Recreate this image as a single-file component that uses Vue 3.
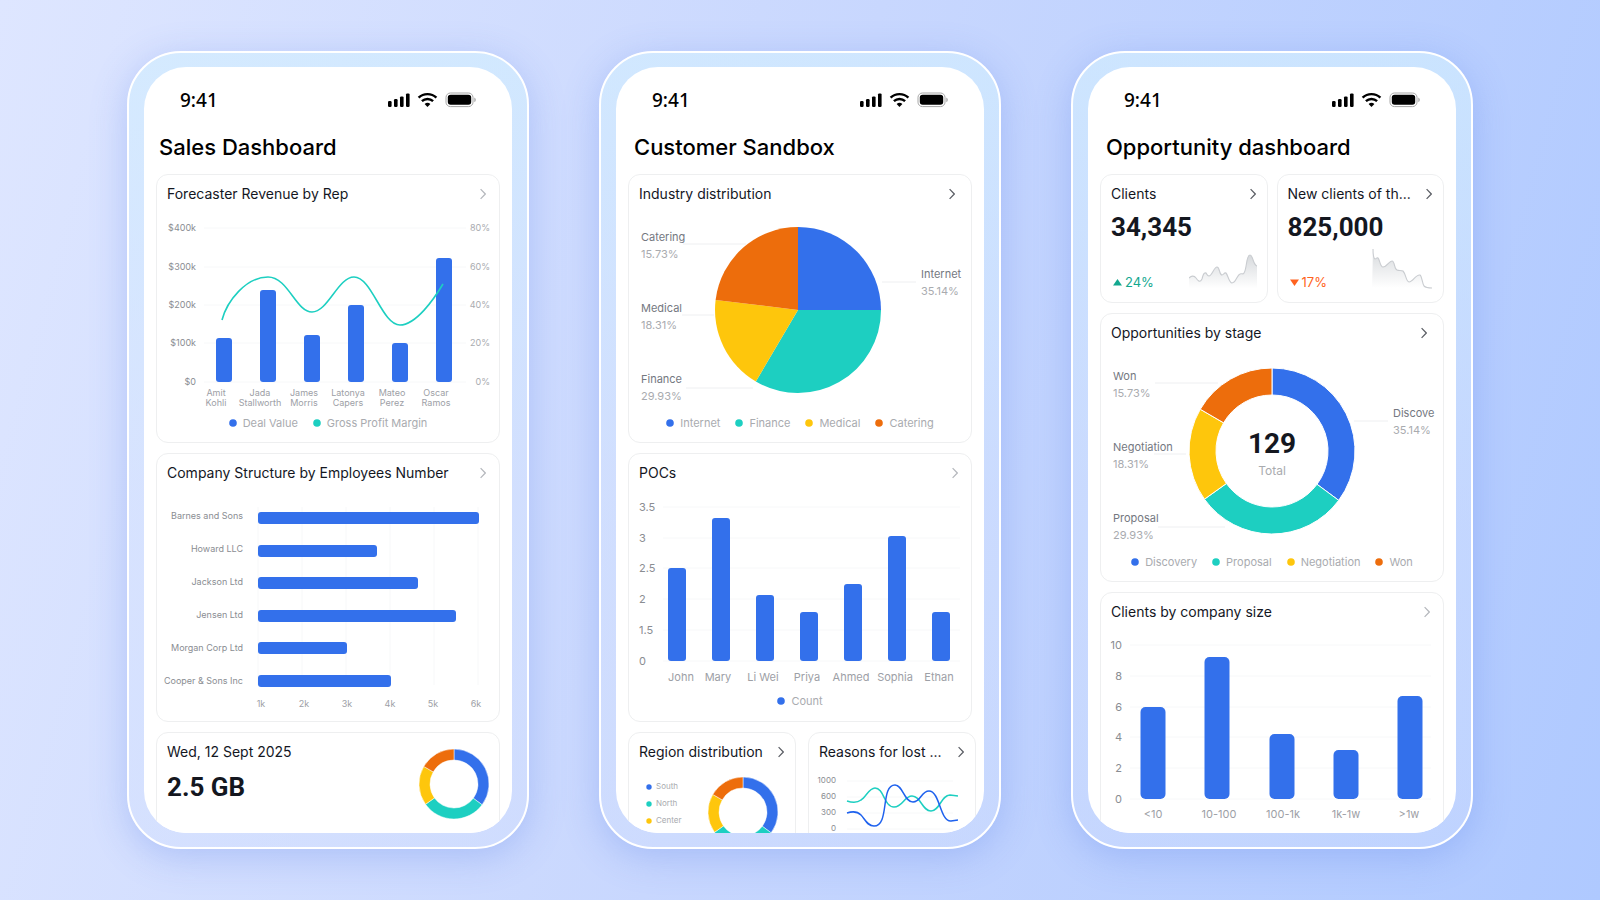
<script setup>
const BLUE = '#3370eb'
const TEAL = '#1dcfc1'
const YELLOW = '#fec60c'
const ORANGE = '#ed6d0c'

const point = (cx, cy, r, deg) => {
  const a = ((deg - 90) * Math.PI) / 180
  return `${(cx + r * Math.cos(a)).toFixed(2)} ${(cy + r * Math.sin(a)).toFixed(2)}`
}

const arc = (cx, cy, outer, inner, from, to) => {
  const large = to - from > 180 ? 1 : 0
  const end = inner
    ? `L${point(cx, cy, inner, to)} A${inner} ${inner} 0 ${large} 0 ${point(cx, cy, inner, from)}`
    : `L${cx} ${cy}`
  return `M${point(cx, cy, outer, from)} A${outer} ${outer} 0 ${large} 1 ${point(cx, cy, outer, to)} ${end} Z`
}

const ringStops = [0, 126.5, 234.5, 300.2, 360]
const pieStops = [0, 90, 210.5, 277, 360]
const shades = [BLUE, TEAL, YELLOW, ORANGE]

const slices = (cx, cy, outer, inner, stops) =>
  shades.map((fill, i) => ({ fill, d: arc(cx, cy, outer, inner, stops[i], stops[i + 1]) }))

const smallRing = slices(36, 36, 35, 24, ringStops)

const callouts = (a, b, c, d) => [
  { x: 12, y: 36, name: a, pct: '15.73%' },
  { x: 12, y: 107, name: b, pct: '18.31%' },
  { x: 12, y: 178, name: c, pct: '29.93%' },
  { x: 292, y: 73, name: d, pct: '35.14%' },
]
const leaders = [
  [54, 39, 117],
  [53, 110, 85],
  [57, 183, 124],
  [253, 77, 287],
]

const combo = {
  left: ['$400k', '$300k', '$200k', '$100k', '$0'],
  right: ['80%', '60%', '40%', '20%', '0%'],
  ys: [23, 62, 100, 138, 177],
  bars: [
    { x: 66, top: 133, lx: 58, a: 'Amit', b: 'Kohli' },
    { x: 110, top: 85, lx: 102, a: 'Jada', b: 'Stallworth' },
    { x: 154, top: 130, lx: 146, a: 'James', b: 'Morris' },
    { x: 198, top: 100, lx: 190, a: 'Latonya', b: 'Capers' },
    { x: 242, top: 138, lx: 234, a: 'Mateo', b: 'Perez' },
    { x: 286, top: 53, lx: 278, a: 'Oscar', b: 'Ramos' },
  ],
}

const companies = [
  ['Barnes and Sons', 221],
  ['Howard LLC', 119],
  ['Jackson Ltd', 160],
  ['Jensen Ltd', 198],
  ['Morgan Corp Ltd', 89],
  ['Cooper & Sons Inc', 133],
]
const thousands = ['1k', '2k', '3k', '4k', '5k', '6k']

const pocs = {
  type: 'bars', title: 'POCs', chevron: 'soft', height: 207,
  gridX: [34, 331], labelX: 10, anchor: 'start', width: 18, radius: 3, base: 177, labelY: 197,
  ticks: [['3.5', 23], ['3', 54], ['2.5', 84], ['2', 115], ['1.5', 146], ['0', 177]],
  bars: [
    { x: 48, top: 84, lx: 52, name: 'John' },
    { x: 92, top: 34, lx: 89, name: 'Mary' },
    { x: 136, top: 111, lx: 134, name: 'Li Wei' },
    { x: 180, top: 128, lx: 178, name: 'Priya' },
    { x: 224, top: 100, lx: 222, name: 'Ahmed' },
    { x: 268, top: 52, lx: 266, name: 'Sophia' },
    { x: 312, top: 128, lx: 310, name: 'Ethan' },
  ],
  legend: [['Count', BLUE]],
}

const sizes = {
  type: 'bars', title: 'Clients by company size', chevron: 'soft', height: 237,
  gridX: [29, 330], labelX: 21, anchor: 'end', width: 25, radius: 5, base: 176, labelY: 195,
  ticks: [['10', 22], ['8', 53], ['6', 84], ['4', 114], ['2', 145], ['0', 176]],
  bars: [
    { x: 52, top: 84, lx: 52, name: '<10' },
    { x: 116, top: 34, lx: 118, name: '10-100' },
    { x: 181, top: 111, lx: 182, name: '100-1k' },
    { x: 245, top: 127, lx: 245, name: '1k-1w' },
    { x: 309, top: 73, lx: 308, name: '>1w' },
  ],
}

const phones = [
  {
    title: 'Sales Dashboard',
    rows: [
      [{
        type: 'combo', title: 'Forecaster Revenue by Rep', chevron: 'soft',
        legend: [['Deal Value', BLUE], ['Gross Profit Margin', TEAL]],
      }],
      [{ type: 'hbar', title: 'Company Structure by Employees Number', chevron: 'soft' }],
      [{ type: 'storage', title: 'Wed, 12 Sept 2025', value: '2.5 GB' }],
    ],
  },
  {
    title: 'Customer Sandbox',
    inset: true,
    rows: [
      [{
        type: 'round', title: 'Industry distribution', chevron: 'dark',
        slices: slices(169, 105, 83, 0, pieStops),
        callouts: callouts('Catering', 'Medical', 'Finance', 'Internet'),
        legend: [['Internet', BLUE], ['Finance', TEAL], ['Medical', YELLOW], ['Catering', ORANGE]],
      }],
      [pocs],
      [
        { type: 'region', title: 'Region distribution', chevron: 'dark', small: true },
        { type: 'reasons', title: 'Reasons for lost ...', chevron: 'dark', small: true },
      ],
    ],
  },
  {
    title: 'Opportunity dashboard',
    inset: true,
    rows: [
      [
        {
          type: 'metric', title: 'Clients', chevron: 'dark', small: true, value: '34,345', change: '24%', up: true,
          w: 68, h: 42, id: 'spark-up',
          line: 'M0 30 C2 28 5 27 7 30 C9 33 11 35 13 31 C14 27 15 24 17 25 C18 26 18 28 20 28 C23 28 25 19 28 19 C31 19 30 27 33 27 C35 27 35 24 37 25 C39 27 40 35 43 35 C47 35 48 27 51 26 C53 25 54 27 55 25 C58 21 57 7 61 7 C64 7 64 17 68 18',
        },
        {
          type: 'metric', title: 'New clients of th...', chevron: 'dark', small: true, value: '825,000', change: '17%', up: false,
          w: 61, h: 42, id: 'spark-down',
          line: 'M1 1 C1 5 1 10 3 11 C4 11 5 9 6 10 C8 12 8 19 11 19 C15 19 17 13 20 13 C23 13 22 21 25 22 C27 23 29 22 31 23 C34 26 34 34 37 34 C41 34 44 26 48 27 C50 28 50 35 52 38 C54 40 57 40 60 40',
        },
      ],
      [{
        type: 'round', title: 'Opportunities by stage', chevron: 'dark',
        slices: slices(171, 107, 83, 56, ringStops), total: '129',
        callouts: callouts('Won', 'Negotiation', 'Proposal', 'Discove'),
        legend: [['Discovery', BLUE], ['Proposal', TEAL], ['Negotiation', YELLOW], ['Won', ORANGE]],
      }],
      [sizes],
    ],
  },
]

const regions = [['South', BLUE], ['North', TEAL], ['Center', YELLOW]]
const reasonTicks = [['1000', 18], ['600', 34], ['300', 50], ['0', 66]]
</script>

<template>
  <main class="stage">
    <section v-for="phone in phones" :key="phone.title" class="phone">
      <div class="screen">
        <div class="status">
          <span class="time">9:41</span>
          <svg class="status-icons" viewBox="0 0 88 16" width="88" height="16" aria-hidden="true">
            <rect x="0" y="9" width="3.6" height="6" rx="1.2" />
            <rect x="6" y="7" width="3.6" height="8" rx="1.2" />
            <rect x="12" y="4.4" width="3.6" height="10.6" rx="1.2" />
            <rect x="18" y="1.4" width="3.6" height="13.6" rx="1.2" />
            <g fill="none" stroke="#000" stroke-width="2.4">
              <path d="M30.6 5.7 A12.8 12.8 0 0 1 48.4 5.7" />
              <path d="M33.9 9.2 A8.2 8.2 0 0 1 45.1 9.2" />
            </g>
            <path d="M39.5 15 L36.6 12 A4.3 4.3 0 0 1 42.4 12 Z" />
            <rect x="58" y="1" width="27" height="13.6" rx="4.4" fill="none" stroke="#a6a6a6" />
            <rect x="59.8" y="2.8" width="23.4" height="10" rx="2.8" />
            <path d="M86.3 5.4 Q87.8 6.2 87.8 7.8 Q87.8 9.4 86.3 10.2 Z" fill="#a6a6a6" />
          </svg>
        </div>
        <h1 class="title" :class="{ inset: phone.inset }">{{ phone.title }}</h1>

        <div class="rows">
          <div
            v-for="(row, r) in phone.rows"
            :key="r"
            class="row"
            :class="{ overhang: row[0].type === 'region' }"
          >
            <article v-for="card in row" :key="card.title" class="card" :class="card.type">
              <header class="head" :class="{ small: card.small, soft: card.chevron === 'soft' }">
                <h2 class="name">{{ card.title }}</h2>
                <button
                  v-if="card.chevron"
                  class="more"
                  type="button"
                  :aria-label="`Open ${card.title}`"
                >
                  <svg viewBox="0 0 6 12" width="6" height="12">
                    <path d="M0.6 1.2 L5.3 6 L0.6 10.8" fill="none" stroke="currentColor" stroke-width="1.2" />
                  </svg>
                </button>
              </header>

              <svg v-if="card.type === 'combo'" class="chart" viewBox="-1 0 342 208">
                <g v-for="(y, i) in combo.ys" :key="y">
                  <line class="grid" x1="46" x2="308" :y1="y" :y2="y" />
                  <text class="t9 mid" x="38" :y="y + 3" text-anchor="end">{{ combo.left[i] }}</text>
                  <text class="t9 pale" x="332" :y="y + 3" text-anchor="end">{{ combo.right[i] }}</text>
                </g>
                <g v-for="bar in combo.bars" :key="bar.a">
                  <rect :x="bar.x - 8" :y="bar.top" width="16" :height="177 - bar.top" rx="3" :fill="BLUE" />
                  <text class="t9 soft" :x="bar.lx" y="191" text-anchor="middle">{{ bar.a }}</text>
                  <text class="t9 soft" :x="bar.lx" y="201" text-anchor="middle">{{ bar.b }}</text>
                </g>
                <path
                  d="M64 115 C69 96 88 72 110 72 C130 72 138 107 154 107 C170 107 180 72 196 72 C214 72 224 120 242 120 C258 120 276 94 285 79"
                  fill="none"
                  :stroke="TEAL"
                  stroke-width="1.6"
                />
              </svg>

              <svg v-else-if="card.type === 'hbar'" class="chart" viewBox="-1 0 342 237">
                <g v-for="(label, i) in thousands" :key="label">
                  <line class="grid" :x1="100 + i * 44" :x2="100 + i * 44" y1="23" y2="201" />
                  <text class="t9 soft" :x="103 + i * 43" y="223" text-anchor="middle">{{ label }}</text>
                </g>
                <g v-for="(company, i) in companies" :key="company[0]">
                  <rect x="100" :y="28 + Math.round(i * 32.6)" :width="company[1]" height="12" rx="3" :fill="BLUE" />
                  <text class="t9 mid" x="85" :y="35 + i * 33" text-anchor="end">{{ company[0] }}</text>
                </g>
              </svg>

              <svg v-else-if="card.type === 'round'" class="chart" viewBox="0 0 342 208">
                <line v-for="l in leaders" :key="l[1]" class="leader" :x1="l[0]" :x2="l[2]" :y1="l[1]" :y2="l[1]" />
                <path
                  v-for="slice in card.slices"
                  :key="slice.fill"
                  :d="slice.d"
                  :fill="slice.fill"
                  :stroke="card.total ? '#fff' : 'none'"
                  stroke-width="1"
                />
                <g v-for="c in card.callouts" :key="c.name">
                  <text class="t11 dark" :x="c.x" :y="c.y">{{ c.name }}</text>
                  <text class="t11 pale" :x="c.x" :y="c.y + 17">{{ c.pct }}</text>
                </g>
                <template v-if="card.total">
                  <text class="total" x="171" y="109" text-anchor="middle">{{ card.total }}</text>
                  <text class="t12 pale" x="171" y="131" text-anchor="middle">Total</text>
                </template>
              </svg>

              <svg v-else-if="card.type === 'bars'" class="chart" :viewBox="`0 0 342 ${card.height}`">
                <g v-for="tick in card.ticks" :key="tick[0]">
                  <line class="grid" :x1="card.gridX[0]" :x2="card.gridX[1]" :y1="tick[1]" :y2="tick[1]" />
                  <text class="t11 mid" :x="card.labelX" :y="tick[1] + 4" :text-anchor="card.anchor">{{ tick[0] }}</text>
                </g>
                <g v-for="bar in card.bars" :key="bar.name">
                  <rect
                    :x="bar.x - card.width / 2"
                    :y="bar.top"
                    :width="card.width"
                    :height="card.base - bar.top"
                    :rx="card.radius"
                    :fill="BLUE"
                  />
                  <text class="t11 soft" :x="bar.lx" :y="card.labelY" text-anchor="middle">{{ bar.name }}</text>
                </g>
              </svg>

              <template v-else-if="card.type === 'storage'">
                <p class="value">{{ card.value }}</p>
                <svg class="ring" viewBox="0 0 72 72" width="72" height="72" aria-hidden="true">
                  <path v-for="s in smallRing" :key="s.fill" :d="s.d" :fill="s.fill" stroke="#fff" stroke-width="0.5" />
                </svg>
              </template>

              <div v-else-if="card.type === 'region'" class="region-body">
                <ul class="region-list">
                  <li v-for="item in regions" :key="item[0]">
                    <svg viewBox="0 0 6 6" width="6" height="6" aria-hidden="true"><circle cx="3" cy="3" r="2.7" :fill="item[1]" /></svg>
                    {{ item[0] }}
                  </li>
                </ul>
                <svg class="region-ring" viewBox="0 0 72 72" width="72" height="72" aria-hidden="true">
                  <path v-for="s in smallRing" :key="s.fill" :d="s.d" :fill="s.fill" stroke="#fff" stroke-width="0.5" />
                </svg>
              </div>

              <svg v-else-if="card.type === 'reasons'" class="chart" viewBox="0 0 166 90">
                <g v-for="tick in reasonTicks" :key="tick[0]">
                  <line class="grid" x1="38" x2="144" :y1="tick[1]" :y2="tick[1]" />
                  <text class="t8 mid" x="27" :y="tick[1] + 2" text-anchor="end">{{ tick[0] }}</text>
                </g>
                <path
                  d="M38 38 C41 39 47 41 52 37 C57 34 60 25 66 25 C75 25 75 44 85 44 C94 44 95 33 103 33 C112 33 113 48 122 48 C131 48 132 32 141 32 L149 33"
                  fill="none"
                  :stroke="TEAL"
                  stroke-width="1.5"
                />
                <path
                  d="M38 50 C44 48 48 48 52 52 C56 56 58 63 65 63 C81 63 71 22 86 22 C94 22 95 39 104 39 C112 39 112 28 120 28 C131 28 131 59 142 58 L149 57"
                  fill="none"
                  stroke="#1f62ee"
                  stroke-width="1.5"
                />
              </svg>

              <template v-else-if="card.type === 'metric'">
                <p class="value">{{ card.value }}</p>
                <div class="trend">
                  <span class="change" :class="card.up ? 'up' : 'down'">
                    <svg viewBox="0 0 9 7" width="9" height="7" aria-hidden="true">
                      <path :d="card.up ? 'M4.5 0 L9 6.6 H0 Z' : 'M0 0.4 H9 L4.5 7 Z'" fill="currentColor" />
                    </svg>
                    {{ card.change }}
                  </span>
                  <svg :viewBox="`0 0 ${card.w} ${card.h}`" :width="card.w" :height="card.h" aria-hidden="true">
                    <defs>
                      <linearGradient :id="card.id" x1="0" y1="0" x2="0" y2="1">
                        <stop offset="0" stop-color="#d6d9dc" />
                        <stop offset="0.95" stop-color="#d6d9dc" stop-opacity="0" />
                      </linearGradient>
                    </defs>
                    <path :d="`${card.line} V${card.h} H0 Z`" :fill="`url(#${card.id})`" />
                    <path :d="card.line" fill="none" stroke="#c9ccd0" stroke-width="1.1" />
                  </svg>
                </div>
              </template>

              <ul v-if="card.legend" class="legend">
                <li v-for="item in card.legend" :key="item[0]">
                  <svg viewBox="0 0 8 8" width="8" height="8" aria-hidden="true"><circle cx="4" cy="4" r="3.8" :fill="item[1]" /></svg>
                  {{ item[0] }}
                </li>
              </ul>
            </article>
          </div>
        </div>
      </div>
    </section>
  </main>
</template>

<style>
html,
body {
  margin: 0;
}
</style>

<style scoped>
.stage {
  box-sizing: border-box;
  display: grid;
  grid-template-columns: repeat(3, minmax(0, 1fr));
  gap: 70px;
  height: 100vh;
  padding: 51px 127px;
  overflow: hidden;
  background: linear-gradient(105deg, #dee6ff 0%, #c8d7fe 48%, #afc9ff 100%);
  font-family: Inter, "Noto Sans", sans-serif;
  color: #14171f;
}

.phone {
  box-sizing: border-box;
  display: flex;
  min-height: 0;
  padding: 14px 15px;
  border: 2px solid #fff;
  border-radius: 54px;
  background: linear-gradient(180deg, rgba(210, 237, 255, 0.7) 0%, rgba(214, 228, 255, 0.45) 55%, rgba(214, 226, 255, 0.35) 100%);
  box-shadow: 0 8px 36px rgba(92, 132, 232, 0.32);
}

.screen {
  flex: 1;
  min-width: 0;
  overflow: hidden;
  border-radius: 42px;
  background: #fff;
}

.status {
  display: flex;
  align-items: center;
  justify-content: space-between;
  height: 20px;
  padding: 23px 36px 0;
}

.time {
  font: 500 19px/20px "Noto Sans", sans-serif;
  color: #000;
}

.title {
  margin: 23px 0 13px;
  padding: 0 15px;
  font-size: 22px;
  line-height: 28px;
  font-weight: 500;
  color: #000;
}

.title.inset {
  padding: 0 18px;
}

.rows {
  display: flex;
  flex-direction: column;
  gap: 10px;
  padding: 0 12px;
}

.row {
  display: flex;
  gap: 9px;
}

.row.overhang {
  gap: 12px;
  margin-right: -4px;
}

.card {
  position: relative;
  box-sizing: border-box;
  flex: 1 1 0;
  min-width: 0;
  border: 1px solid #eeeff0;
  border-radius: 12px;
  background: #fff;
}

.head {
  display: flex;
  align-items: center;
  justify-content: space-between;
  padding: 9px 16px 1px 10px;
}

.head.soft {
  padding-right: 13px;
}

.head.small {
  padding-right: 11px;
}

.name {
  margin: 0;
  font-size: 14px;
  line-height: 20px;
  font-weight: 400;
  white-space: nowrap;
}

.more {
  display: flex;
  padding: 0;
  border: 0;
  background: none;
  color: #595c63;
}

.soft .more {
  color: #b4b7bc;
}

.chart {
  display: block;
  width: 100%;
}

.grid {
  stroke: #f7f8f9;
}

.leader {
  stroke: #eeeff1;
}

.t8 {
  font-size: 8px;
}

.t9 {
  font-size: 9px;
}

.t11 {
  font-size: 11px;
}

.t12 {
  font-size: 12px;
}

text.dark {
  fill: #74787f;
}

text.mid {
  fill: #8a8d92;
}

text.soft {
  fill: #9da0a6;
}

text.pale {
  fill: #a9abaf;
}

.total {
  font: 700 28px Roboto, sans-serif;
  fill: #14171f;
}

.legend {
  display: flex;
  justify-content: center;
  gap: 15px;
  margin: 0;
  padding: 0 0 9px;
  list-style: none;
  font-size: 11px;
  line-height: 20px;
  color: #a9abaf;
}

.legend li {
  display: flex;
  align-items: center;
  gap: 6px;
}

.bars .legend {
  padding-bottom: 10px;
}

.value {
  margin: 0;
  padding: 1px 10px 0;
  font: 700 26px/42px Roboto, sans-serif;
}

.storage {
  height: 129px;
}

.storage .value {
  line-height: 46px;
}

.ring {
  position: absolute;
  top: 15px;
  right: 9px;
}

.trend {
  display: flex;
  align-items: flex-end;
  justify-content: space-between;
  padding: 0 10px 12px 12px;
}

.change {
  display: flex;
  align-items: center;
  gap: 3px;
  font-size: 13px;
  line-height: 16px;
}

.change.up {
  color: #12a88f;
}

.change.down {
  color: #ff6320;
}

.region-body {
  display: flex;
  justify-content: space-between;
  padding: 13px 16px 12px 17px;
}

.region-list {
  display: flex;
  flex-direction: column;
  margin: 0;
  padding: 2px 0 0;
  list-style: none;
  font-size: 8px;
  line-height: 17px;
  color: #a9abaf;
}

.region-list li {
  display: flex;
  align-items: center;
  gap: 4px;
}
</style>
